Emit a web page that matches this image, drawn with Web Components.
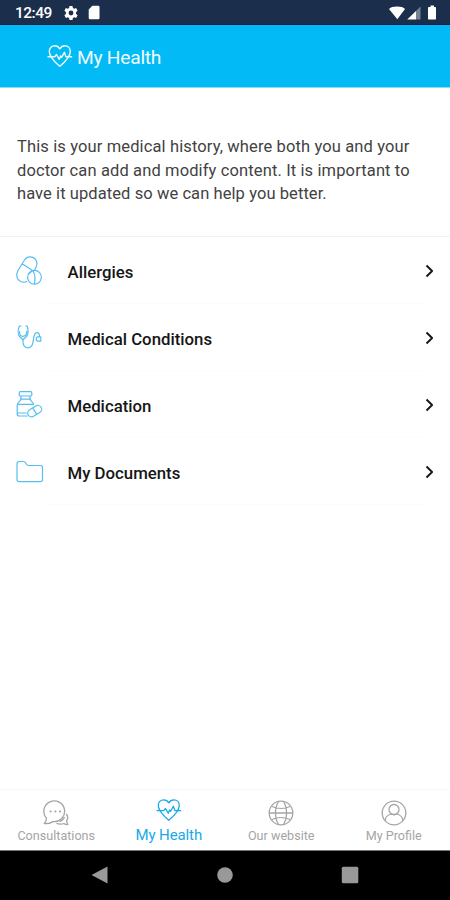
<!DOCTYPE html>
<html lang="en">
<head>
<meta charset="utf-8">
<title>My Health</title>
<style>
  html, body { margin: 0; height: 100%; background: #fff; }
  body { font-family: Roboto, "Noto Sans", sans-serif; overflow: hidden; }
</style>
</head>
<body>
<health-app></health-app>

<script>
const heart = `
  <path d="M12.800 4.800C11.500 2.600 9.600 1.800 7.700 1.800 4.500 1.800 2.300 4.200 2.300 7.400c0 5.600 5.500 10.600 10.500 14.900 5-4.300 10.500-9.300 10.500-14.900 0-3.200-2.200-5.600-5.400-5.600-1.900 0-3.800.8-5.100 3z"/>
  <path d="M.5 12.700h7.200l1.800-2.200 2.800 4.800 1.300-3.300 1 1.300 2.800-5 1.500 4.400h6.300"/>`

// name -> [width, height, markup]
const icons = {
  heart: [26, 25, heart],
  pills: [30, 32, `
    <path d="M4 15.500 10.200 5.500a6.700 6.700 0 0 1 12 6.300L20.300 15.500M4 15.500C1.500 20 3 25 6.500 26.500c2.500 1 5 .6 6.800-.3M8.200 8.800 18.500 15.500l-4.500 4"/>
    <circle cx="20.500" cy="22.200" r="6.900"/><path d="M19 15.500c2 4 2.400 9 1.500 13.500"/>`],
  stethoscope: [30, 32, `
    <path d="M7.500 4H5.400C4 7.500 3.500 12.500 5.500 14.500l3.500 3.300 3.500-3.300C14.500 12.500 14.500 7.500 13.200 4h-2M5.500 9c-.3 3.500 1 5.300 3.500 5.300S12.800 12.500 12.700 9"/>
    <path d="M9 17.800c-.3 4.500.8 8 5 8 7.500 0 3.800-13 8-15 2.800-.8 3.800 1.500 3.500 4M23.500 14.800c-1.700 1.200-1.700 3.700 0 4.400h3.300v-4.400z"/>`],
  bottle: [30, 32, `
    <rect x="5.200" y="2.700" width="12.600" height="4.300" rx="1.200"/>
    <path d="M7 7v3.200c0 1.400-3.800 3-3.800 6V25c0 1.300.8 2 2 2h8.500M16 7v3.200c0 1.400 3.800 3 3.800 6M3.200 15.300h16.400M3.200 24h9.500M6 10.200h11"/>
    <rect x="13.200" y="18.300" width="15" height="7.600" rx="3.800" transform="rotate(-31 20.700 22.100)"/>
    <path d="m18.700 18.900 4 6.500"/>`],
  folder: [30, 32, `
    <path d="M3 8c0-1.500.8-2.500 2.300-2.500h4.400c2.300 0 2.200 4 4.600 4h11.900c1.500 0 2.300.8 2.300 2.300v11.700c0 1.400-.8 2.200-2.200 2.200H5.200C3.800 25.700 3 24.900 3 23.500z"/>`],
  chat: [26, 26, `
    <path d="M3.300 18A10.400 10.400 0 1 1 10 21.600C7 23.400 4 24 1.200 23.500c1.500-1.500 2.300-3.500 2.100-5.500z"/>
    <path d="M13.500 23.300c3 1.200 5.700.7 7.400.2 1.300.9 2.600 1.400 4 1-.9-1.300-1.300-2.500-1.200-3.800 1.300-2.300 1.100-5-.5-6.700M16.500 21.500c2.500-.5 4-2 5-4.500"/>
    <path d="M7.500 11.500h.2M12.300 11.500h.2M17 11.500h.2" stroke-width="2" stroke-linecap="round"/>`],
  globe: [26, 26, `
    <circle cx="13" cy="13" r="11.800"/>
    <path d="M1.200 13h23.600M4 6.500c5.300 2.500 12.700 2.500 18 0M4 19.500c5.300-2.500 12.700-2.500 18 0M10.500 1.500c-4 6.500-4 16.500 0 23M15.500 1.500c4 6.500 4 16.500 0 23"/>`],
  profile: [26, 26, `
    <circle cx="13" cy="13" r="11.800"/><circle cx="13" cy="9.500" r="5"/>
    <path d="M4.300 20.500c0-4 2-5.200 5.700-6.500 2 1 4 1 6 0 3.700 1.300 5.700 2.500 5.700 6.500"/>`],
  chevron: [10, 14, `<path d="m1.500 1.500 5.600 5.500-5.600 5.500" stroke-width="1.900"/>`]
}

class HealthIcon extends HTMLElement {
  connectedCallback() {
    const [w, h, body] = icons[this.getAttribute('name')]
    this.attachShadow({ mode: 'open' }).innerHTML = `
      <style>
        :host { display: block; flex: none; width: ${w}px; height: ${h}px; }
        svg { display: block; fill: none; stroke: currentColor; stroke-width: var(--stroke, 1.1); stroke-linejoin: round; }
      </style>
      <svg width="${w}" height="${h}" viewBox="0 0 ${w} ${h}">${body}</svg>`
  }
}

class StatusBar extends HTMLElement {
  connectedCallback() {
    this.attachShadow({ mode: 'open' }).innerHTML = `
      <style>
        :host {
          display: flex; align-items: center; box-sizing: border-box; height: 25px;
          padding: 1px 13px 0 15px; background: #1b2e4b; border-bottom: 1px solid #14204a; color: #fff;
        }
        time { width: 49px; font: 500 15.500px/24px Roboto, sans-serif; letter-spacing: -.5px; }
        svg { display: block; fill: #fff; }
        .sd { margin-left: 10px; }
        .wifi { margin-left: auto; }
        .battery { margin-left: 7px; }
      </style>
      <time>12:49</time>
      <svg width="14" height="14" viewBox="0 0 14 14">
        <path fill-rule="evenodd" d="M5.500 0h3l.4 2 1.300.8 1.900-.7 1.500 2.600L12.100 6v2l1.500 1.300-1.500 2.600-1.900-.7-1.300.8-.4 2h-3l-.4-2-1.300-.8-1.900.7L.4 9.300 1.900 8V6L.4 4.700l1.500-2.600 1.900.7L5.100 2zM7 4.600a2.400 2.400 0 1 0 0 4.800 2.400 2.400 0 0 0 0-4.800z"/>
      </svg>
      <svg class="sd" width="12" height="15" viewBox="0 0 12 15"><path d="M4.300.7h6a1.200 1.200 0 0 1 1.200 1.200v11.200a1.200 1.200 0 0 1-1.200 1.200H1.900A1.200 1.200 0 0 1 .7 13.100V4.500z"/></svg>
      <svg class="wifi" width="18" height="14" viewBox="0 0 18 14"><path d="M0 3C2-.3 14-.3 16 3L8.300 13.300z"/></svg>
      <svg width="14" height="14" viewBox="0 0 14 14"><path d="M.2 13.500 9 5v8.500z"/><path d="M9 5l4.500-4.500v13H9z" opacity=".4"/></svg>
      <svg class="battery" width="9" height="15" viewBox="0 0 9 15"><path d="M2.500.5h3.500V2h1c.7 0 1 .4 1 1v10.500c0 .6-.3 1-1 1h-6c-.7 0-1-.4-1-1V3c0-.6.3-1 1-1h1.500z"/></svg>`
  }
}

class AppHeader extends HTMLElement {
  connectedCallback() {
    this.attachShadow({ mode: 'open' }).innerHTML = `
      <style>
        :host {
          display: flex; align-items: center; gap: 4px; box-sizing: border-box; height: 63px;
          padding: 1px 0 0 47px; background: #02baf5; border-bottom: 1px solid #8bdefa;
          color: #f1fcff; --stroke: 1.400;
        }
        h1 { margin: 2px 0 0; font-size: 19.200px; font-weight: 400; line-height: 24px; letter-spacing: -.25px; }
      </style>
      <health-icon name="heart"></health-icon>
      <h1><slot></slot></h1>`
  }
}

class RecordRow extends HTMLElement {
  connectedCallback() {
    this.attachShadow({ mode: 'open' }).innerHTML = `
      <style>
        :host { display: flex; align-items: center; height: 67px; padding: 0 15px 0 14px; color: #161616; }
        .icon { color: #58bdf0; --stroke: 1.200; }
        .label {
          flex: 1; display: flex; align-items: center; align-self: stretch; margin-left: 5px; padding: 4px 0 0 18.500px;
          box-sizing: border-box; border-bottom: 1px solid #fcfcfc;
          font-size: 16.800px; font-weight: 500;
        }
      </style>
      <health-icon class="icon" name="${this.getAttribute('icon')}"></health-icon>
      <div class="label"><slot></slot></div>
      <health-icon name="chevron"></health-icon>`
  }
}

class TabItem extends HTMLElement {
  connectedCallback() {
    this.attachShadow({ mode: 'open' }).innerHTML = `
      <style>
        :host {
          flex: 1; display: flex; flex-direction: column; align-items: center;
          color: #a5a5a5; font-size: 12.600px; line-height: 18px; --stroke: 1.300;
        }
        :host([active]) { color: #18a9e8; font-size: 15px; letter-spacing: -.1px; }
        health-icon { margin-bottom: 1px; }
        :host([active]) health-icon { margin: -2px 0 3px; }
      </style>
      <health-icon name="${this.getAttribute('icon')}"></health-icon>
      <span><slot></slot></span>`
  }
}

class SystemNav extends HTMLElement {
  connectedCallback() {
    this.attachShadow({ mode: 'open' }).innerHTML = `
      <style>
        :host {
          display: flex; align-items: center; justify-content: space-between; box-sizing: border-box;
          height: 50px; padding: 0 91px 1px 90px; background: #000; border-top: 1px solid #777;
        }
        svg { display: block; fill: #999; }
      </style>
      <svg width="18" height="18" viewBox="0 0 18 18"><path d="M1.500 9 17.500.5v17z"/></svg>
      <svg width="18" height="18" viewBox="0 0 18 18"><circle cx="9" cy="9" r="7.800"/></svg>
      <svg width="18" height="18" viewBox="0 0 18 18"><rect x=".8" y=".8" width="16.500" height="16.500" rx="1.500"/></svg>`
  }
}

class HealthApp extends HTMLElement {
  connectedCallback() {
    this.attachShadow({ mode: 'open' }).innerHTML = `
      <style>
        :host { display: flex; flex-direction: column; width: 450px; height: 900px; background: #fff; }
        main { flex: 1; }
        p {
          box-sizing: border-box; height: 149px; margin: 0; padding: 47px 17px 0;
          border-bottom: 1px solid #f2f2f2; color: #424242;
          font-size: 16.500px; line-height: 23.700px; letter-spacing: .125px; white-space: nowrap;
        }
        .line { display: block; }
        .line:last-child { letter-spacing: .08px; }
        nav { display: flex; box-sizing: border-box; height: 61px; padding-top: 10px; border-top: 1px solid #f7f7f7; }
      </style>
      <status-bar></status-bar>
      <app-header>My Health</app-header>
      <main>
        <p>
          <span class="line">This is your medical history, where both you and your</span>
          <span class="line">doctor can add and modify content. It is important to</span>
          <span class="line">have it updated so we can help you better.</span>
        </p>
        <record-row icon="pills">Allergies</record-row>
        <record-row icon="stethoscope">Medical Conditions</record-row>
        <record-row icon="bottle">Medication</record-row>
        <record-row icon="folder">My Documents</record-row>
      </main>
      <nav>
        <tab-item icon="chat">Consultations</tab-item>
        <tab-item icon="heart" active>My Health</tab-item>
        <tab-item icon="globe">Our website</tab-item>
        <tab-item icon="profile">My Profile</tab-item>
      </nav>
      <system-nav></system-nav>`
  }
}

customElements.define('health-icon', HealthIcon)
customElements.define('status-bar', StatusBar)
customElements.define('app-header', AppHeader)
customElements.define('record-row', RecordRow)
customElements.define('tab-item', TabItem)
customElements.define('system-nav', SystemNav)
customElements.define('health-app', HealthApp)
</script>
</body>
</html>
